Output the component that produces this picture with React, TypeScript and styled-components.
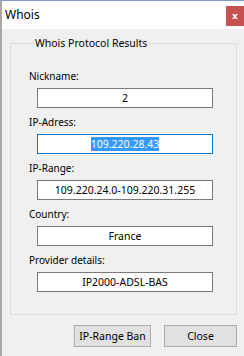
import React from 'react';
import styled, { createGlobalStyle } from 'styled-components';

const GlobalStyle = createGlobalStyle`
  html, body {
    margin: 0;
    padding: 0;
    background: #f0f0f0;
  }
  body {
    font-family: "Noto Sans", "Open Sans", sans-serif;
    font-size: 10px;
    color: #000;
  }
`

const Window = styled.div`
  width: 244px;
  height: 356px;
  box-sizing: border-box;
  background: #f0f0f0;
  border-top: 1px solid #7a9cc6;
  border-left: 2px solid #a8a8a8;
  display: flex;
  flex-direction: column;
  overflow: hidden;
`
const TitleBar = styled.div`
  height: 28px;
  background: #fff;
  display: flex;
  justify-content: space-between;
  align-items: flex-start;
  flex-shrink: 0;
`
const Title = styled.span`
  font-size: 12px;
  line-height: 28px;
  margin-left: 3px;
  color: #000;
`
const CloseX = styled.div`
  width: 18px;
  height: 20px;
  margin-top: 5px;
  background: #c75050;
  color: #fff;
  font-family: "DejaVu Sans", sans-serif;
  font-weight: bold;
  font-size: 9px;
  display: flex;
  align-items: center;
  justify-content: center;
`
const Group = styled.fieldset`
  margin: 6px 0 0 8px;
  width: 227px;
  box-sizing: border-box;
  padding: 17px 23px 22px 18px;
  border: 1px solid #dcdcdc;
  display: flex;
  flex-direction: column;
`
const Legend = styled.legend`
  padding: 0 1px;
  margin-left: 5px;
  line-height: 16px;
  font-size: 10.5px;
`
const Field = styled.div`
  display: flex;
  flex-direction: column;
  gap: 4px;
  & + & {
    margin-top: 6px;
  }
`
const Label = styled.label`
  line-height: 16px;
`
const Box = styled.div<{ $focused?: boolean }>`
  margin-left: 8px;
  height: 20px;
  box-sizing: border-box;
  background: #fff;
  border: 1px solid ${p => (p.$focused ? '#0078d7' : '#7a7a7a')};
  display: flex;
  align-items: center;
  justify-content: center;
  font-size: 10.5px;
  line-height: 14px;
  white-space: nowrap;
`
const Selected = styled.span`
  background: #3399ff;
  color: #fff;
`
const Buttons = styled.div`
  display: flex;
  justify-content: flex-end;
  gap: 13px;
  margin: 10px 7px 0 0;
`
const Button = styled.button<{ $width: number }>`
  width: ${p => p.$width}px;
  height: 22px;
  box-sizing: border-box;
  background: #e1e1e1;
  border: 1px solid #adadad;
  font-family: inherit;
  font-size: 10.5px;
  color: #000;
  padding: 0;
  white-space: nowrap;
`

const fields = [
  { label: 'Nickname:', value: '2' },
  { label: 'IP-Adress:', value: '109.220.28.43', focused: true },
  { label: 'IP-Range:', value: '109.220.24.0-109.220.31.255' },
  { label: 'Country:', value: 'France' },
  { label: 'Provider details:', value: 'IP2000-ADSL-BAS' },
];

const App: React.FC = () => {
  return (
    <>
      <GlobalStyle />
      <Window>
        <TitleBar>
          <Title>Whois</Title>
          <CloseX>x</CloseX>
        </TitleBar>
        <Group>
          <Legend>Whois Protocol Results</Legend>
          {fields.map(f => (
            <Field key={f.label}>
              <Label>{f.label}</Label>
              <Box $focused={f.focused}>
                {f.focused ? <Selected>{f.value}</Selected> : f.value}
              </Box>
            </Field>
          ))}
        </Group>
        <Buttons>
          <Button $width={77}>IP-Range Ban</Button>
          <Button $width={73}>Close</Button>
        </Buttons>
      </Window>
    </>
  );
}

export default App;
